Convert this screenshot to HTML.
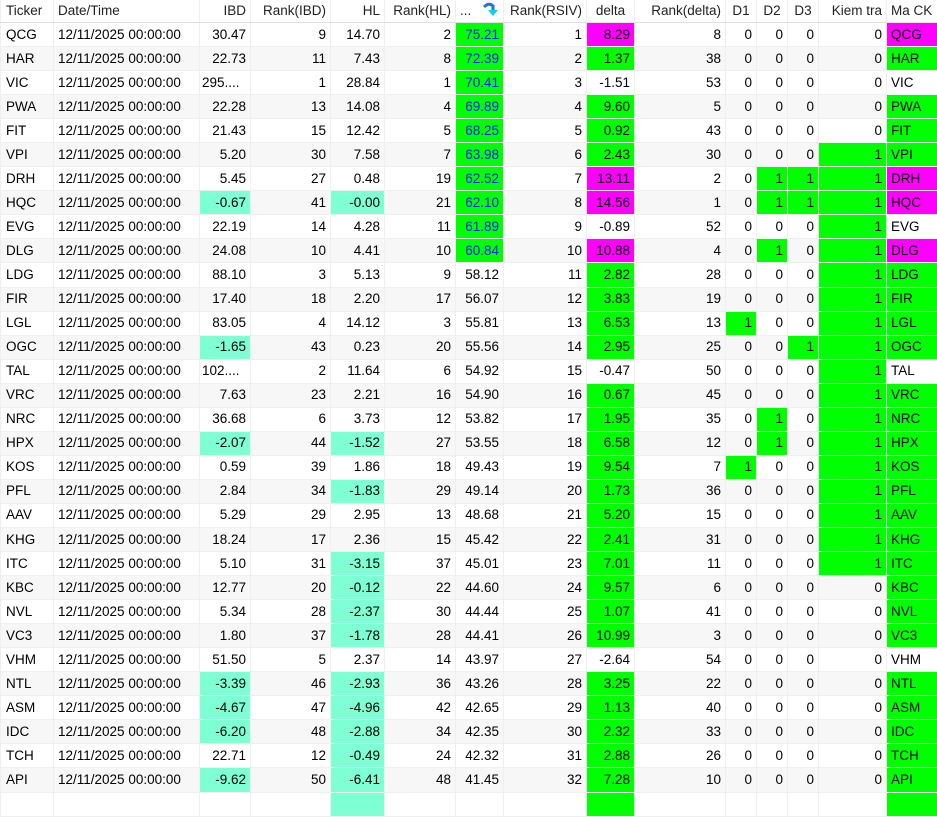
<!DOCTYPE html><html><head><meta charset="utf-8"><style>
body{margin:0;width:937px;height:795px;overflow:hidden;background:#fff;font-family:"Liberation Sans",sans-serif;font-size:13.5px;color:#000}
table{border-collapse:collapse;table-layout:fixed;width:937px}
td,th{border:1px solid #efefef;padding:0 4px;white-space:nowrap;overflow:hidden;text-align:right;height:23.05px;line-height:22px}
th{font-weight:normal;height:20px;color:#222;border-top:none;border-bottom:1px solid #e0e0e0}
tr:nth-child(odd) td{background:#f7f7f7}
td:first-child,th:first-child,td:nth-child(2),th:nth-child(2),td:last-child,th:last-child{text-align:left}
td:first-child,th:first-child{padding-left:5px}
tr td.g{background:#00ff00}tr td.m{background:#ff00ff}tr td.a{background:#7fffd4}
tr td.b{background:#00ff00;color:#1515ff}
</style></head><body><table>
<colgroup><col style="width:53px"><col style="width:146px"><col style="width:51px"><col style="width:80px"><col style="width:54px"><col style="width:71px"><col style="width:48px"><col style="width:83px"><col style="width:48px"><col style="width:91px"><col style="width:31px"><col style="width:31px"><col style="width:31px"><col style="width:68px"><col style="width:51px"></colgroup>
<tr><th>Ticker</th><th>Date/Time</th><th>IBD</th><th>Rank(IBD)</th><th>HL</th><th>Rank(HL)</th><th style="text-align:left;position:relative">...<svg style="position:absolute;left:27px;top:2px" width="16" height="16" viewBox="0 0 16 16"><path d="M1 5 Q6 0 10 4 L10 8" stroke="#2a6fe0" stroke-width="3" fill="none"/><path d="M5 8 L15 8 L10 14 Z" fill="#10d0f0"/></svg></th><th>Rank(RSIV)</th><th style="text-align:center">delta</th><th>Rank(delta)</th><th style="text-align:center">D1</th><th style="text-align:center">D2</th><th style="text-align:center">D3</th><th>Kiem tra</th><th>Ma CK</th></tr>
<tr><td>QCG</td><td>12/11/2025 00:00:00</td><td>30.47</td><td>9</td><td>14.70</td><td>2</td><td class="b">75.21</td><td>1</td><td class="m">8.29</td><td>8</td><td>0</td><td>0</td><td>0</td><td>0</td><td class="m">QCG</td></tr>
<tr><td>HAR</td><td>12/11/2025 00:00:00</td><td>22.73</td><td>11</td><td>7.43</td><td>8</td><td class="b">72.39</td><td>2</td><td class="g">1.37</td><td>38</td><td>0</td><td>0</td><td>0</td><td>0</td><td class="g">HAR</td></tr>
<tr><td>VIC</td><td>12/11/2025 00:00:00</td><td style="text-align:left;padding-left:2px">295....</td><td>1</td><td>28.84</td><td>1</td><td class="b">70.41</td><td>3</td><td>-1.51</td><td>53</td><td>0</td><td>0</td><td>0</td><td>0</td><td>VIC</td></tr>
<tr><td>PWA</td><td>12/11/2025 00:00:00</td><td>22.28</td><td>13</td><td>14.08</td><td>4</td><td class="b">69.89</td><td>4</td><td class="g">9.60</td><td>5</td><td>0</td><td>0</td><td>0</td><td>0</td><td class="g">PWA</td></tr>
<tr><td>FIT</td><td>12/11/2025 00:00:00</td><td>21.43</td><td>15</td><td>12.42</td><td>5</td><td class="b">68.25</td><td>5</td><td class="g">0.92</td><td>43</td><td>0</td><td>0</td><td>0</td><td>0</td><td class="g">FIT</td></tr>
<tr><td>VPI</td><td>12/11/2025 00:00:00</td><td>5.20</td><td>30</td><td>7.58</td><td>7</td><td class="b">63.98</td><td>6</td><td class="g">2.43</td><td>30</td><td>0</td><td>0</td><td>0</td><td class="g">1</td><td class="g">VPI</td></tr>
<tr><td>DRH</td><td>12/11/2025 00:00:00</td><td>5.45</td><td>27</td><td>0.48</td><td>19</td><td class="b">62.52</td><td>7</td><td class="m">13.11</td><td>2</td><td>0</td><td class="g">1</td><td class="g">1</td><td class="g">1</td><td class="m">DRH</td></tr>
<tr><td>HQC</td><td>12/11/2025 00:00:00</td><td class="a">-0.67</td><td>41</td><td class="a">-0.00</td><td>21</td><td class="b">62.10</td><td>8</td><td class="m">14.56</td><td>1</td><td>0</td><td class="g">1</td><td class="g">1</td><td class="g">1</td><td class="m">HQC</td></tr>
<tr><td>EVG</td><td>12/11/2025 00:00:00</td><td>22.19</td><td>14</td><td>4.28</td><td>11</td><td class="b">61.89</td><td>9</td><td>-0.89</td><td>52</td><td>0</td><td>0</td><td>0</td><td class="g">1</td><td>EVG</td></tr>
<tr><td>DLG</td><td>12/11/2025 00:00:00</td><td>24.08</td><td>10</td><td>4.41</td><td>10</td><td class="b">60.84</td><td>10</td><td class="m">10.88</td><td>4</td><td>0</td><td class="g">1</td><td>0</td><td class="g">1</td><td class="m">DLG</td></tr>
<tr><td>LDG</td><td>12/11/2025 00:00:00</td><td>88.10</td><td>3</td><td>5.13</td><td>9</td><td>58.12</td><td>11</td><td class="g">2.82</td><td>28</td><td>0</td><td>0</td><td>0</td><td class="g">1</td><td class="g">LDG</td></tr>
<tr><td>FIR</td><td>12/11/2025 00:00:00</td><td>17.40</td><td>18</td><td>2.20</td><td>17</td><td>56.07</td><td>12</td><td class="g">3.83</td><td>19</td><td>0</td><td>0</td><td>0</td><td class="g">1</td><td class="g">FIR</td></tr>
<tr><td>LGL</td><td>12/11/2025 00:00:00</td><td>83.05</td><td>4</td><td>14.12</td><td>3</td><td>55.81</td><td>13</td><td class="g">6.53</td><td>13</td><td class="g">1</td><td>0</td><td>0</td><td class="g">1</td><td class="g">LGL</td></tr>
<tr><td>OGC</td><td>12/11/2025 00:00:00</td><td class="a">-1.65</td><td>43</td><td>0.23</td><td>20</td><td>55.56</td><td>14</td><td class="g">2.95</td><td>25</td><td>0</td><td>0</td><td class="g">1</td><td class="g">1</td><td class="g">OGC</td></tr>
<tr><td>TAL</td><td>12/11/2025 00:00:00</td><td style="text-align:left;padding-left:2px">102....</td><td>2</td><td>11.64</td><td>6</td><td>54.92</td><td>15</td><td>-0.47</td><td>50</td><td>0</td><td>0</td><td>0</td><td class="g">1</td><td>TAL</td></tr>
<tr><td>VRC</td><td>12/11/2025 00:00:00</td><td>7.63</td><td>23</td><td>2.21</td><td>16</td><td>54.90</td><td>16</td><td class="g">0.67</td><td>45</td><td>0</td><td>0</td><td>0</td><td class="g">1</td><td class="g">VRC</td></tr>
<tr><td>NRC</td><td>12/11/2025 00:00:00</td><td>36.68</td><td>6</td><td>3.73</td><td>12</td><td>53.82</td><td>17</td><td class="g">1.95</td><td>35</td><td>0</td><td class="g">1</td><td>0</td><td class="g">1</td><td class="g">NRC</td></tr>
<tr><td>HPX</td><td>12/11/2025 00:00:00</td><td class="a">-2.07</td><td>44</td><td class="a">-1.52</td><td>27</td><td>53.55</td><td>18</td><td class="g">6.58</td><td>12</td><td>0</td><td class="g">1</td><td>0</td><td class="g">1</td><td class="g">HPX</td></tr>
<tr><td>KOS</td><td>12/11/2025 00:00:00</td><td>0.59</td><td>39</td><td>1.86</td><td>18</td><td>49.43</td><td>19</td><td class="g">9.54</td><td>7</td><td class="g">1</td><td>0</td><td>0</td><td class="g">1</td><td class="g">KOS</td></tr>
<tr><td>PFL</td><td>12/11/2025 00:00:00</td><td>2.84</td><td>34</td><td class="a">-1.83</td><td>29</td><td>49.14</td><td>20</td><td class="g">1.73</td><td>36</td><td>0</td><td>0</td><td>0</td><td class="g">1</td><td class="g">PFL</td></tr>
<tr><td>AAV</td><td>12/11/2025 00:00:00</td><td>5.29</td><td>29</td><td>2.95</td><td>13</td><td>48.68</td><td>21</td><td class="g">5.20</td><td>15</td><td>0</td><td>0</td><td>0</td><td class="g">1</td><td class="g">AAV</td></tr>
<tr><td>KHG</td><td>12/11/2025 00:00:00</td><td>18.24</td><td>17</td><td>2.36</td><td>15</td><td>45.42</td><td>22</td><td class="g">2.41</td><td>31</td><td>0</td><td>0</td><td>0</td><td class="g">1</td><td class="g">KHG</td></tr>
<tr><td>ITC</td><td>12/11/2025 00:00:00</td><td>5.10</td><td>31</td><td class="a">-3.15</td><td>37</td><td>45.01</td><td>23</td><td class="g">7.01</td><td>11</td><td>0</td><td>0</td><td>0</td><td class="g">1</td><td class="g">ITC</td></tr>
<tr><td>KBC</td><td>12/11/2025 00:00:00</td><td>12.77</td><td>20</td><td class="a">-0.12</td><td>22</td><td>44.60</td><td>24</td><td class="g">9.57</td><td>6</td><td>0</td><td>0</td><td>0</td><td>0</td><td class="g">KBC</td></tr>
<tr><td>NVL</td><td>12/11/2025 00:00:00</td><td>5.34</td><td>28</td><td class="a">-2.37</td><td>30</td><td>44.44</td><td>25</td><td class="g">1.07</td><td>41</td><td>0</td><td>0</td><td>0</td><td>0</td><td class="g">NVL</td></tr>
<tr><td>VC3</td><td>12/11/2025 00:00:00</td><td>1.80</td><td>37</td><td class="a">-1.78</td><td>28</td><td>44.41</td><td>26</td><td class="g">10.99</td><td>3</td><td>0</td><td>0</td><td>0</td><td>0</td><td class="g">VC3</td></tr>
<tr><td>VHM</td><td>12/11/2025 00:00:00</td><td>51.50</td><td>5</td><td>2.37</td><td>14</td><td>43.97</td><td>27</td><td>-2.64</td><td>54</td><td>0</td><td>0</td><td>0</td><td>0</td><td>VHM</td></tr>
<tr><td>NTL</td><td>12/11/2025 00:00:00</td><td class="a">-3.39</td><td>46</td><td class="a">-2.93</td><td>36</td><td>43.26</td><td>28</td><td class="g">3.25</td><td>22</td><td>0</td><td>0</td><td>0</td><td>0</td><td class="g">NTL</td></tr>
<tr><td>ASM</td><td>12/11/2025 00:00:00</td><td class="a">-4.67</td><td>47</td><td class="a">-4.96</td><td>42</td><td>42.65</td><td>29</td><td class="g">1.13</td><td>40</td><td>0</td><td>0</td><td>0</td><td>0</td><td class="g">ASM</td></tr>
<tr><td>IDC</td><td>12/11/2025 00:00:00</td><td class="a">-6.20</td><td>48</td><td class="a">-2.88</td><td>34</td><td>42.35</td><td>30</td><td class="g">2.32</td><td>33</td><td>0</td><td>0</td><td>0</td><td>0</td><td class="g">IDC</td></tr>
<tr><td>TCH</td><td>12/11/2025 00:00:00</td><td>22.71</td><td>12</td><td class="a">-0.49</td><td>24</td><td>42.32</td><td>31</td><td class="g">2.88</td><td>26</td><td>0</td><td>0</td><td>0</td><td>0</td><td class="g">TCH</td></tr>
<tr><td>API</td><td>12/11/2025 00:00:00</td><td class="a">-9.62</td><td>50</td><td class="a">-6.41</td><td>48</td><td>41.45</td><td>32</td><td class="g">7.28</td><td>10</td><td>0</td><td>0</td><td>0</td><td>0</td><td class="g">API</td></tr>
<tr><td></td><td></td><td></td><td></td><td class="a"></td><td></td><td></td><td></td><td class="g"></td><td></td><td></td><td></td><td></td><td></td><td class="g"></td></tr>
</table></body></html>
